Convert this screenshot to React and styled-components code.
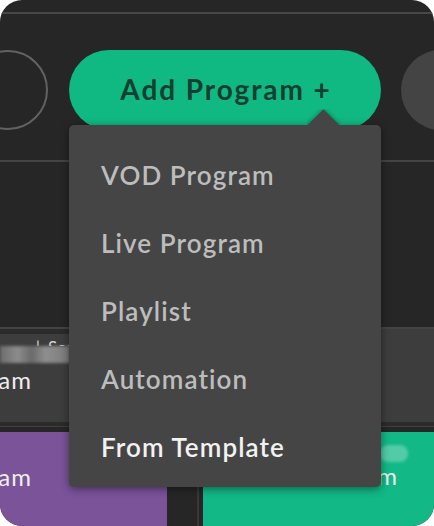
import React from 'react'
import styled, { createGlobalStyle } from 'styled-components'

const GlobalStyle = createGlobalStyle`
  html, body {
    margin: 0;
    padding: 0;
    background: #ffffff;
  }
  body {
    font-family: Lato, "Open Sans", "Liberation Sans", sans-serif;
  }
`

const Frame = styled.div`
  position: relative;
  width: 434px;
  height: 526px;
  background: #262626;
  border-radius: 22px;
  overflow: hidden;
  display: flex;
  flex-direction: column;
`

const TopStrip = styled.div`
  height: 12px;
  flex-shrink: 0;
  border-bottom: 2px solid #474747;
`

const ButtonRow = styled.div`
  display: flex;
  align-items: center;
  margin: 36px 0 0 -32px;
  height: 80px;
  flex-shrink: 0;
`

const GhostCircle = styled.div`
  width: 80px;
  height: 80px;
  box-sizing: border-box;
  border: 2px solid #626262;
  border-radius: 50%;
  flex-shrink: 0;
`

const SolidCircle = styled.div`
  width: 80px;
  height: 80px;
  border-radius: 50%;
  background: #444444;
  margin-left: 20px;
  flex-shrink: 0;
`

const AddButton = styled.button`
  width: 312px;
  height: 80px;
  margin-left: 21px;
  flex-shrink: 0;
  border: none;
  border-radius: 40px;
  background: #10b981;
  color: #173f31;
  font-family: Lato, "Open Sans", sans-serif;
  font-weight: 700;
  font-size: 28px;
  letter-spacing: 1.9px;
  padding: 0 0 2px 2px;
`

const Divider = styled.div`
  height: 2px;
  flex-shrink: 0;
  background: #444444;
  margin-top: ${p => p.$top || 0}px;
`

const EmptyLane = styled.div`
  height: 165px;
  flex-shrink: 0;
`

const ProgramRow = styled.div`
  display: flex;
  height: 93px;
  flex-shrink: 0;
  background: #3d3d3d;
`

const RowCard = styled.div`
  width: 220px;
  border-top: 5px solid #2b2b2b;
  display: flex;
  flex-direction: column;
`

const MetaLine = styled.div`
  height: 7px;
  margin-top: 5px;
  overflow: hidden;
  display: flex;
  color: #d6d6d6;
  font-size: 17px;
  line-height: 17px;
  white-space: nowrap;
`

const MetaLead = styled.span`
  width: 40px;
  display: flex;
  justify-content: flex-end;
  margin-right: 8px;
`

const Smudge = styled.div`
  height: 17px;
  width: ${p => p.$w}px;
  background: ${p => p.$bg};
  filter: blur(1.5px);
  border-radius: ${p => p.$r || 0}px;
  margin-left: ${p => p.$left || 0}px;
`

const Title = styled.div`
  width: ${p => p.$w}px;
  margin-left: ${p => p.$left || 0}px;
  margin-top: ${p => p.$top || 0}px;
  overflow: ${p => (p.$clip ? 'hidden' : 'visible')};
  display: flex;
  justify-content: flex-end;
  white-space: nowrap;
  font-size: 24px;
  letter-spacing: 1px;
  line-height: 28px;
  color: #eeeeee;
`

const BandGap = styled.div`
  height: 10px;
  flex-shrink: 0;
  border-top: 4px solid #2b2b2b;
  box-sizing: border-box;
  &::before {
    content: '';
    display: block;
    height: 1px;
    background: #3f3f3f;
  }
`

const BottomRow = styled.div`
  display: flex;
  flex: 1;
`

const ColorCard = styled.div`
  width: ${p => (p.$w ? `${p.$w}px` : 'auto')};
  flex: ${p => (p.$w ? 'none' : 1)};
  background: ${p => p.$bg};
  display: flex;
  flex-direction: column;
  padding-top: ${p => p.$pt}px;
`

const LaneGap = styled.div`
  width: 36px;
  display: flex;
  justify-content: flex-end;
  padding-right: 4px;
  box-sizing: border-box;
  &::after {
    content: '';
    width: 2px;
    background: #383838;
  }
`

const Menu = styled.ul`
  position: absolute;
  z-index: 10;
  left: 69px;
  top: 125px;
  width: 312px;
  height: 362px;
  box-sizing: border-box;
  margin: 0;
  padding: 16px 0 0;
  list-style: none;
  background: #454545;
  border-radius: 5px;
  box-shadow: 0 2px 8px rgba(0, 0, 0, 0.45);
`

const ArrowClip = styled.div`
  position: absolute;
  left: 238px;
  top: -16px;
  width: 34px;
  height: 16px;
  overflow: hidden;
  &::before {
    content: '';
    position: absolute;
    left: 5px;
    top: 5px;
    width: 23px;
    height: 23px;
    background: #454545;
    transform: rotate(45deg);
    box-shadow: 0 0 5px rgba(0, 0, 0, 0.4);
  }
`

const MenuItem = styled.li`
  height: 68px;
  display: flex;
  align-items: center;
  padding-left: 32px;
  font-size: 26px;
  letter-spacing: 1.1px;
  font-weight: 600;
  color: ${p => (p.$active ? '#f2f2f2' : '#bdbdbd')};
`

const items = ['VOD Program', 'Live Program', 'Playlist', 'Automation', 'From Template']

export default function App() {
  return (
    <>
      <GlobalStyle />
      <Frame>
        <TopStrip />
        <ButtonRow>
          <GhostCircle />
          <AddButton>Add Program +</AddButton>
          <SolidCircle />
        </ButtonRow>
        <Divider $top={30} />
        <EmptyLane />
        <Divider />
        <ProgramRow>
          <RowCard>
            <MetaLine>
              <MetaLead>|</MetaLead>
              Season
            </MetaLine>
            <Smudge $w={70} $bg="linear-gradient(90deg, #6c6c6c, #8c8c8c 25%, #6a6a6a 45%, #8e8e8e 65%, #7a7a7a)" />
            <Title $w={32} $top={3}>Live Program</Title>
          </RowCard>
        </ProgramRow>
        <BandGap />
        <BottomRow>
          <ColorCard $w={167} $bg="#7a5399" $pt={31}>
            <Title $w={32}>VOD Program</Title>
          </ColorCard>
          <LaneGap />
          <ColorCard $bg="#12b886" $pt={13}>
            <Smudge $w={28} $left={177} $r={8} $bg="rgba(255, 255, 255, 0.28)" />
            <Title $w={17} $left={178} $clip>Program</Title>
          </ColorCard>
        </BottomRow>
        <Menu>
          <ArrowClip />
          {items.map((name, i) => (
            <MenuItem key={name} $active={i === items.length - 1}>{name}</MenuItem>
          ))}
        </Menu>
      </Frame>
    </>
  )
}
